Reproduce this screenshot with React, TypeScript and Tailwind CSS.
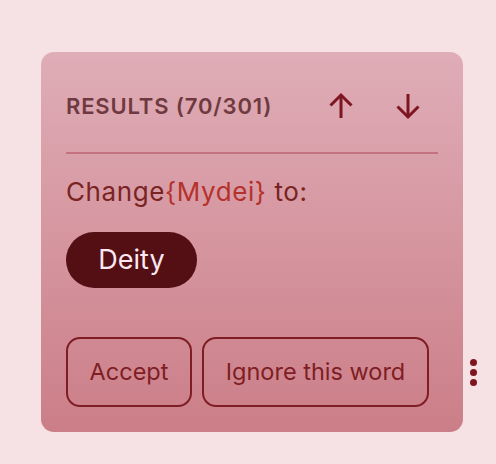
import React from "react";

function Arrow({ dir }: { dir: "up" | "down" }) {
  return (
    <svg width="26" height="28" viewBox="0 0 26 28" fill="none" stroke="#7d1621" strokeWidth="3" className={dir === "down" ? "rotate-180" : ""}>
      <path d="M13 26 V3" />
      <path d="M2.5 13.5 L13 3 L23.5 13.5" />
    </svg>
  );
}

export default function App() {
  return (
    <div className="min-h-[464px] w-[496px] bg-[#f6e1e5] pt-[52px] pl-[41px]" style={{ fontFamily: "Inter, 'Noto Sans', sans-serif" }}>
      <div className="w-[422px] h-[380px] rounded-[13px] bg-gradient-to-b from-[#dfadb7] to-[#cb7e88] pt-[26px] px-[25px] pb-[25px] flex flex-col">
        <div className="h-[56px] flex items-center justify-between">
          <span className="text-[22px] font-semibold text-[#6e3a3f] tracking-[0.85px]">RESULTS (70/301)</span>
          <div className="flex items-center gap-[19px] mr-[6px]">
            <button className="w-[48px] h-[48px] flex items-center justify-center"><Arrow dir="up" /></button>
            <button className="w-[48px] h-[48px] flex items-center justify-center"><Arrow dir="down" /></button>
          </div>
        </div>
        <div className="mt-[18px] h-[2px] bg-[#c4727f]" />
        <div className="mt-[22px] text-[26px] leading-[32px] text-[#7a2323] tracking-[0.6px]">
          Change<span className="text-[#b5312b]">{"{Mydei}"}</span> to:
        </div>
        <div className="mt-[24px]">
          <span className="inline-flex items-center justify-center h-[56px] w-[131px] rounded-full bg-[#540f15] text-[#fde7f0] text-[27px]">Deity</span>
        </div>
        <div className="mt-[49px] flex items-center gap-[10px]">
          <button className="shrink-0 h-[70px] w-[126px] rounded-[14px] border-2 border-[#7f1d24] text-[23.5px] text-[#7f1d24]">Accept</button>
          <button className="shrink-0 h-[70px] w-[227px] rounded-[14px] border-2 border-[#7f1d24] text-[23.5px] text-[#7f1d24]">Ignore this word</button>
          <div className="shrink-0 ml-[31px] flex flex-col gap-[3px]">
            <span className="w-[7px] h-[7px] rounded-full bg-[#7d1621]" />
            <span className="w-[7px] h-[7px] rounded-full bg-[#7d1621]" />
            <span className="w-[7px] h-[7px] rounded-full bg-[#7d1621]" />
          </div>
        </div>
      </div>
    </div>
  );
}
